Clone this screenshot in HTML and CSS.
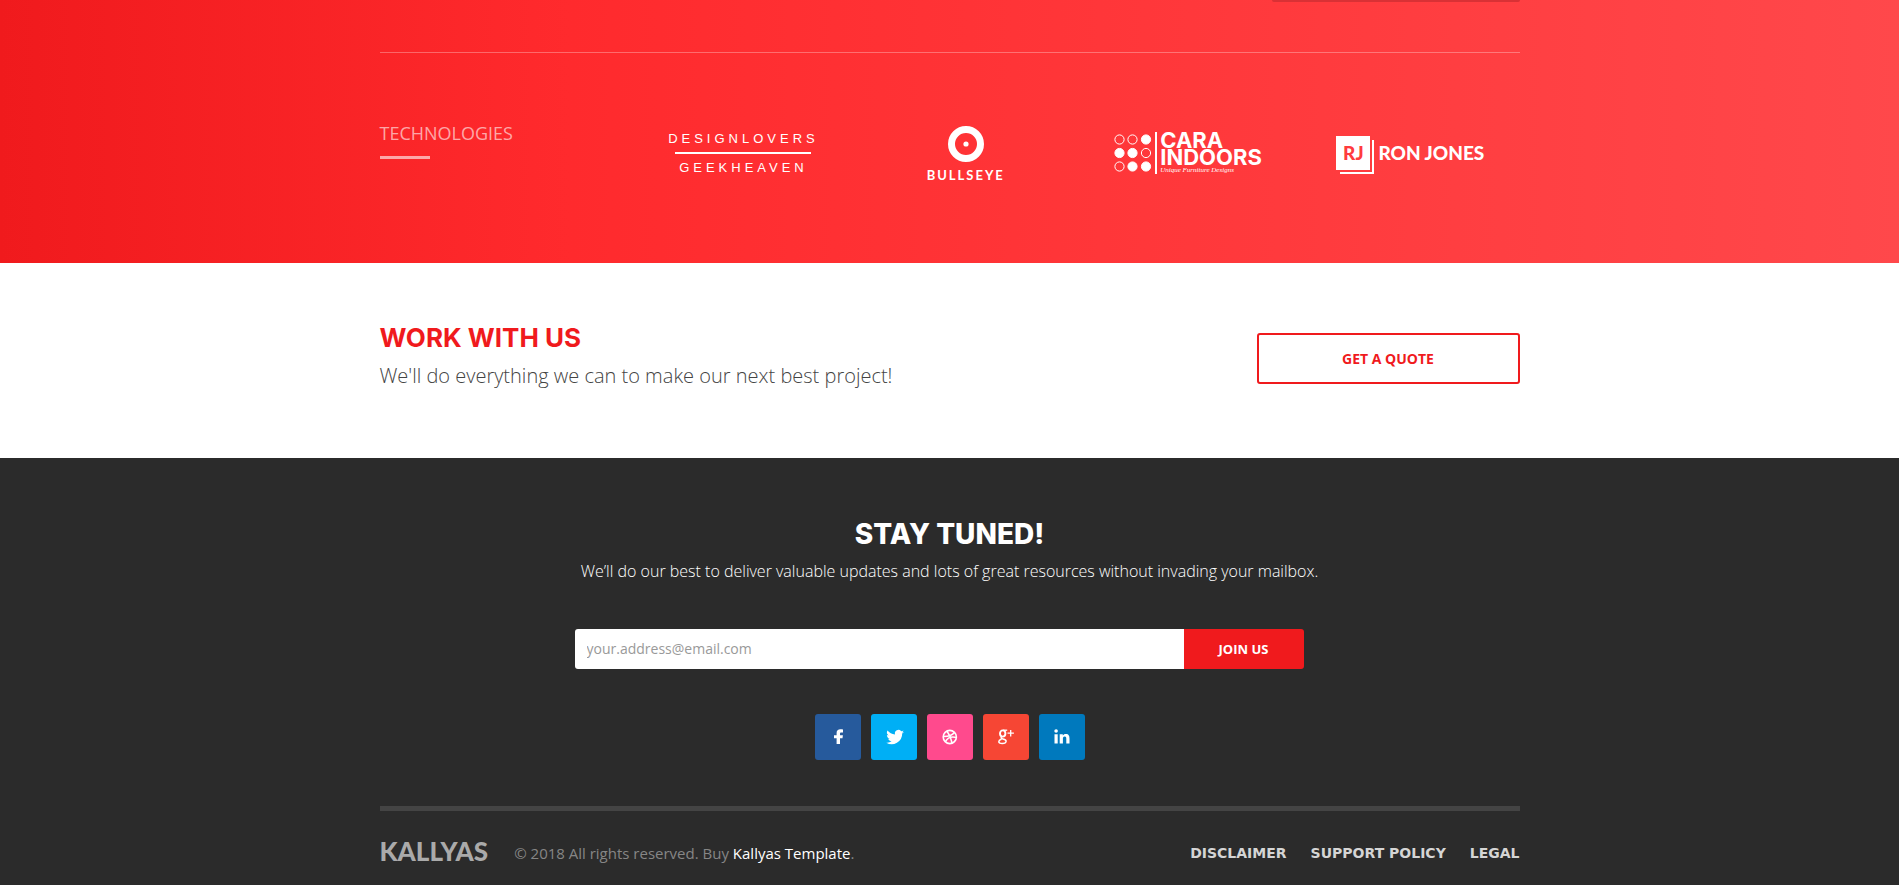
FILE: index.html
```html
<!DOCTYPE html>
<html lang="en">
<head>
<meta charset="utf-8">
<meta name="viewport" content="width=device-width, initial-scale=1">
<title>Kallyas</title>
<link rel="stylesheet" href="styles.css">
</head>
<body>
<section class="partners">
  <div class="container">
    <div class="card-row"><div class="card-edge"></div></div>
    <div class="partners-body">
      <h2 class="partners-title">TECHNOLOGIES</h2>
      <ul class="logos">
        <li class="logo-designlovers"><span>DESIGNLOVERS</span><span class="second">GEEKHEAVEN</span></li>
        <li class="logo-bullseye">
          <svg width="36" height="36" viewBox="0 0 36 36" aria-hidden="true"><circle cx="18" cy="18" r="14.5" fill="none" stroke="#fff" stroke-width="7"/><circle cx="18" cy="18" r="2.6" fill="#fff"/></svg>
          <span>BULLSEYE</span>
        </li>
        <li class="logo-cara">
          <svg width="38" height="40" viewBox="0 0 38 40" fill="none" stroke="#fff" aria-hidden="true">
            <circle cx="5.5" cy="6.5" r="4.6"/><circle cx="18.5" cy="6.5" r="4.6"/><circle cx="32" cy="6.5" r="4.6" fill="#fff"/>
            <circle cx="5.5" cy="20" r="4.6" fill="#fff"/><circle cx="18.5" cy="20" r="4.6" fill="#fff"/><circle cx="32" cy="20" r="4.6"/>
            <circle cx="5.5" cy="33.5" r="4.6"/><circle cx="18.5" cy="33.5" r="4.6" fill="#fff"/><circle cx="32" cy="33.5" r="4.6" fill="#fff"/>
          </svg>
          <div class="cara-text"><span>CARA</span><span>INDOORS</span><small>Unique Furniture Designs</small></div>
        </li>
        <li class="logo-ron"><span class="ron-mark">RJ</span><span>RON JONES</span></li>
      </ul>
    </div>
  </div>
</section>

<section class="work">
  <div class="container work-row">
    <div>
      <h2 class="work-title">WORK WITH US</h2>
      <p class="work-text">We'll do everything we can to make our next best project!</p>
    </div>
    <a class="quote" href="#quote">GET A QUOTE</a>
  </div>
</section>

<footer class="footer">
  <div class="container">
    <h2 class="stay-title">STAY TUNED!</h2>
    <p class="stay-text">We’ll do our best to deliver valuable updates and lots of great resources without invading your mailbox.</p>
    <form class="newsletter">
      <input type="email" placeholder="your.address@email.com" aria-label="Email address">
      <button type="button">JOIN US</button>
    </form>
    <nav class="social" aria-label="Social">
      <a class="facebook" href="#facebook" aria-label="Facebook"><svg viewBox="0 0 18 18"><path d="M14 1.6v3h-1.6c-1.1 0-1.4.5-1.4 1.3v1.3h2.9l-.4 3H11V16H7.6v-5.8H5v-3h2.6V5c0-2.4 1.5-3.7 3.7-3.7 1.2 0 2.2.1 2.7.3z"/></svg></a>
      <a class="twitter" href="#twitter" aria-label="Twitter"><svg viewBox="0 0 18 18"><path transform="translate(1 .6)" d="M18 3.2c-.7.3-1.3.5-2 .6.7-.5 1.3-1.2 1.5-2-.7.4-1.5.7-2.3.8a3.6 3.6 0 0 0-6.2 3.3A10.3 10.3 0 0 1 1.5 2a3.7 3.7 0 0 0 1.1 4.9c-.6 0-1.2-.2-1.7-.5 0 1.8 1.2 3.3 2.9 3.7-.5.1-1.1.1-1.6 0 .5 1.5 1.8 2.5 3.4 2.6A7.4 7.4 0 0 1 .3 14.1 10.5 10.5 0 0 0 16.2 5c.7-.5 1.3-1.1 1.8-1.8z"/></svg></a>
      <a class="dribbble" href="#dribbble" aria-label="Dribbble"><svg viewBox="0 0 18 18"><g fill="none" stroke="#fff" stroke-width="1.6"><circle cx="8.8" cy="9" r="6.6"/><path d="M6 3.2c2.6 3.3 4.2 7 5 11.6M2.3 8.5c4.6.1 8.8-1 11.3-4.2M4.3 13.8c2.2-4 6-5.6 11-4.3"/></g></svg></a>
      <a class="google" href="#google" aria-label="Google Plus"><svg viewBox="0 0 18 18"><g fill="none" stroke="#fff"><ellipse cx="5.7" cy="5.5" rx="2.7" ry="3.1" stroke-width="1.9"/><path d="M6 2.2h4.2" stroke-width="1.3"/><path d="M5.2 8.7c-2 1.3-1.2 1.9.8 2.4 2.6.6 3.3 1.3 3.1 2.4-.3 2.5-7.3 2.7-7.3.2 0-1.3 1-1.9 2.6-2.4" stroke-width="1.5"/><path d="M13.7 2v6.4M10.5 5.2h6.4" stroke-width="1.3"/></g></svg></a>
      <a class="linkedin" href="#linkedin" aria-label="LinkedIn"><svg viewBox="0 0 18 18"><path d="M1.5 6.2h3.2v9.3H1.5zM3.1 1.2a1.8 1.8 0 1 1 0 3.6 1.8 1.8 0 0 1 0-3.6zM6.7 6.2h3.1v1.3c.5-.9 1.5-1.6 3-1.6 3.1 0 3.7 2.1 3.7 4.7v4.9h-3.2V11c0-1.2-.1-2.4-1.6-2.4s-1.8 1.1-1.8 2.4v4.5H6.7z"/></svg></a>
    </nav>
    <div class="bottom">
      <span class="brand">KALLYAS</span>
      <p class="copy">© 2018 All rights reserved. Buy <a href="#template">Kallyas Template</a>.</p>
      <nav class="legal" aria-label="Legal">
        <a href="#disclaimer">DISCLAIMER</a><a href="#support">SUPPORT POLICY</a><a href="#legal">LEGAL</a>
      </nav>
    </div>
  </div>
</footer>
</body>
</html>
```
FILE: styles.css
```css
* { box-sizing: border-box; }
body { margin: 0; background: #2b2b2b; font-family: "Open Sans", sans-serif; }
h2, p, ul { margin: 0; padding: 0; }
a { text-decoration: none; }
.container { max-width: 1140px; margin: 0 auto; }

.partners {
  background: linear-gradient(90deg, #f01a1d 0%, #ff2a2d 30%, #ff484b 100%);
  padding-bottom: 75px;
  color: #fff;
}
.card-row { display: flex; justify-content: flex-end; height: 53px; border-bottom: 1px solid rgba(255, 255, 255, .3); }
.card-edge { width: 248px; height: 2px; background: #d93135; border-radius: 0 0 3px 3px; }
.partners-body { display: grid; grid-template-columns: 22% 1fr; padding-top: 67px; }
.partners-title { font-size: 18px; line-height: 26px; font-weight: 500; color: rgba(255, 255, 255, .6); }
.partners-title::after { content: ""; display: block; width: 50px; height: 3px; margin-top: 10px; background: rgba(255, 255, 255, .6); }
.logos { display: grid; grid-template-columns: repeat(4, 1fr); height: 68px; list-style: none; }
.logos li { display: flex; align-items: center; justify-content: center; padding: 0 0 2px 4px; }
.logos .logo-designlovers { flex-direction: column; font: 13px/20px "Liberation Sans", sans-serif; letter-spacing: 4px; }
.logo-designlovers .second { min-width: 136px; padding-top: 4px; border-top: 2px solid #fff; margin-top: 3px; text-align: center; }
.logos .logo-bullseye { flex-direction: column; gap: 5px; padding-bottom: 0; font: 700 13px/16px Lato, sans-serif; letter-spacing: 2px; }
.logo-cara { gap: 3px; }
.cara-text { display: flex; flex-direction: column; padding-left: 3px; border-left: 2px solid #fff; font: 700 22px/17px Inter, sans-serif; }
.cara-text small { font: italic 7px/8px "Liberation Serif", serif; }
.logo-ron { gap: 8px; font: 900 19px/24px Lato, sans-serif; }
.ron-mark { width: 34px; height: 34px; background: #fff; color: #ff3b3e; text-align: center; line-height: 34px; box-shadow: 2px 2px 0 #ff3b3e, 4px 4px 0 #fff; }

.work { background: #fff; padding: 56px 0; }
.work-row { display: flex; justify-content: space-between; align-items: flex-start; }
.work-title { color: #f01a1d; font: 700 26px/38px Inter, sans-serif; }
.work-text { margin-top: 4px; color: #444; font-size: 20px; line-height: 30px; font-weight: 300; padding-bottom: 11px; }
.quote { width: 263px; margin-top: 14px; padding: 13px; border: 2px solid #f01a1d; border-radius: 3px; color: #f01a1d; font-size: 14px; line-height: 21px; font-weight: 700; text-align: center; }

.footer { background: #2b2b2b; padding-top: 57px; }
.stay-title { color: #fff; text-align: center; font: 800 28px/38px Inter, sans-serif; }
.stay-text { margin-top: 6px; color: #fff; text-align: center; font-size: 16px; line-height: 24px; font-weight: 300; }
.newsletter { display: flex; width: 729px; max-width: 100%; margin: 46px auto 45px 195px; }
.newsletter input { flex: 1; min-width: 0; height: 40px; padding: 0 12px 2px; border: 0; border-radius: 3px 0 0 3px; background: #fff; font: 14px "Open Sans", sans-serif; }
.newsletter input::placeholder { color: #999; }
.newsletter button { width: 120px; border: 0; border-radius: 0 3px 3px 0; background: #f01a1d; color: #fff; font: 700 13px "Open Sans", sans-serif; }
.social { display: flex; justify-content: center; gap: 10px; }
.social a { display: grid; place-items: center; width: 46px; height: 46px; border-radius: 3px; }
.social svg { width: 18px; height: 18px; fill: #fff; overflow: visible; }
.facebook { background: #265a9c; }
.twitter { background: #00aff5; }
.dribbble { background: #ff4a8d; }
.google { background: #f64634; }
.linkedin { background: #0079bd; }
.bottom { display: flex; align-items: center; margin-top: 46px; padding: 25px 0 18px; border-top: 5px solid #444; }
.brand { color: #aaa; font: 900 26px/30px Lato, sans-serif; }
.copy { margin: 4px auto 0 26px; color: #868686; font-size: 15px; line-height: 24px; }
.copy a { color: #fff; }
.legal { display: flex; gap: 24px; margin-top: 4px; }
.legal a { color: #d5d5d5; font: 700 14px/22px "DejaVu Sans", sans-serif; }
```
